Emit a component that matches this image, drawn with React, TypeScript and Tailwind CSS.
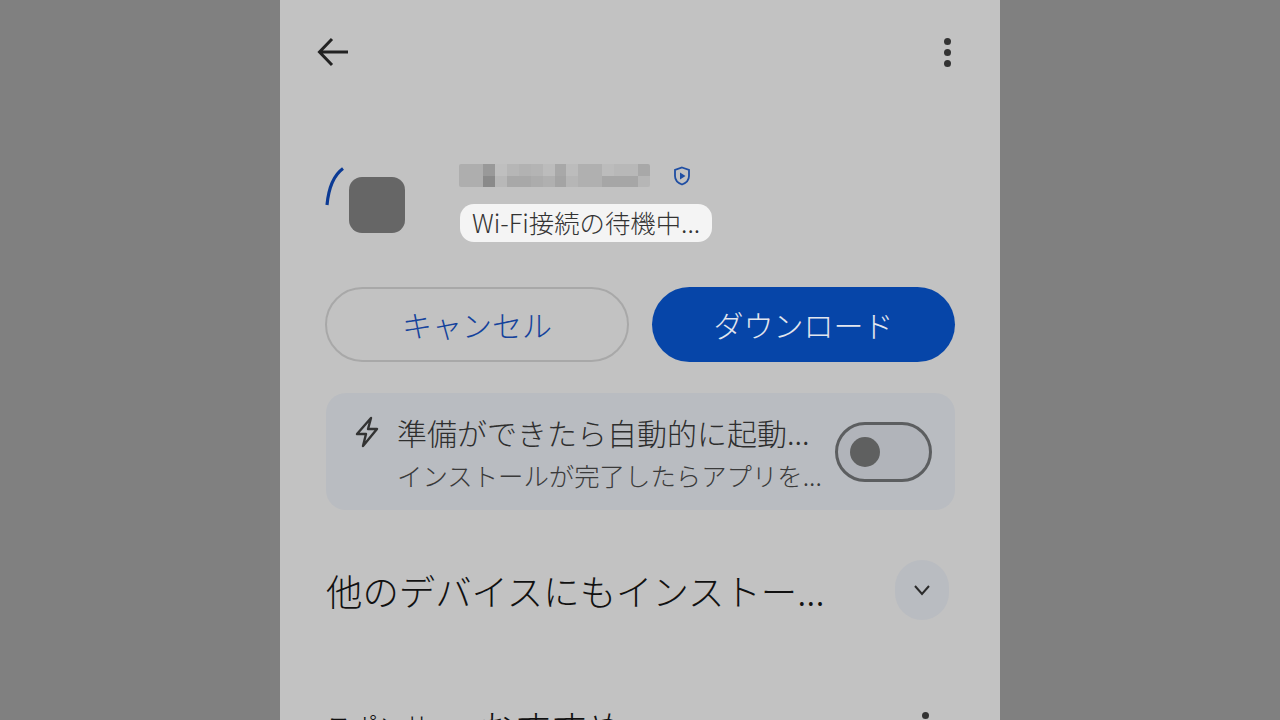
const mosaic = [
  "#aeaeae", "#aeaeae", "#999999", "#bfbfbf", "#b6b6b6", "#b2b2b2", "#b4b4b4", "#bcbcbc", "#a8a8a8", "#bcbcbc", "#b0b0b0", "#b0b0b0", "#bcbcbc", "#b8b8b8", "#b8b8b8", "#a8a8a8",
  "#aeaeae", "#aeaeae", "#8a8a8a", "#b8b8b8", "#a8a8a8", "#a8a8a8", "#acacac", "#b0b0b0", "#a4a4a4", "#b6b6b6", "#b0b0b0", "#b0b0b0", "#a6a6a6", "#a6a6a6", "#a6a6a6", "#b6b6b6",
]

export default function App() {
  return (
    <div className="flex justify-center h-screen overflow-hidden bg-[#808080] font-['Noto_Sans_CJK_JP','Noto_Sans',sans-serif] font-light">
      <div className="w-[720px] h-[720px] overflow-hidden bg-[#c2c2c2] pl-[45px] pr-[45px]">
        {/* Top bar */}
        <div className="flex items-center justify-between h-[104px] -ml-[9px] mr-[4px]">
          <svg width="34" height="32" viewBox="0 0 34 32" fill="none" stroke="#222" strokeWidth="3">
            <path d="M32 16H4M16 3L3.5 16L16 29" />
          </svg>
          <div className="flex flex-col gap-[4px]">
            <div className="w-[7px] h-[7px] rounded-full bg-[#333]"></div>
            <div className="w-[7px] h-[7px] rounded-full bg-[#333]"></div>
            <div className="w-[7px] h-[7px] rounded-full bg-[#333]"></div>
          </div>
        </div>

        {/* App header */}
        <div className="flex mt-[60px] h-[78px]">
          <div className="relative w-[134px]">
            <svg className="absolute left-0 top-[3px]" width="20" height="40" viewBox="0 0 20 40" fill="none" stroke="#0b3a94" strokeWidth="3.2">
              <path d="M18 1.5C9 8 3.5 22 2 38" />
            </svg>
            <div className="absolute left-[24px] top-[13px] w-[56px] h-[56px] rounded-[13px] bg-[#666666]"></div>
          </div>
          <div className="flex flex-col items-start">
            <div className="flex items-center gap-[23px]">
              <div className="grid grid-cols-[repeat(16,1fr)] w-[191px] h-[23px] rounded-[2px] overflow-hidden blur-[0.6px]">
                {mosaic.map((c, i) => (
                  <div key={i} style={{ backgroundColor: c }}></div>
                ))}
              </div>
              <svg width="18" height="20" viewBox="0 0 18 20" fill="none">
                <path d="M9 1.5L16 4V10C16 14 13 17 9 18.5C5 17 2 14 2 10V4Z" stroke="#1f4ea3" strokeWidth="1.8" />
                <path d="M7 6.5L12.5 10L7 13.5Z" fill="#1f4ea3" />
              </svg>
            </div>
            <div className="mt-[17px] ml-[1px] h-[38px] w-[252px] pl-[12px] flex items-center rounded-[14px] bg-[#f4f4f4] text-[25.4px] leading-none text-[#333] whitespace-nowrap">
              Wi-Fi接続の待機中...
            </div>
          </div>
        </div>

        {/* Buttons */}
        <div className="flex gap-[23px] mt-[45px]">
          <button className="w-[304px] h-[75px] rounded-full border-2 border-[#a8a8a8] text-[#14429c] text-[30px]">
            キャンセル
          </button>
          <button className="w-[303px] h-[75px] rounded-full bg-[#0645a8] text-[#e2e6ee] text-[30px]">
            ダウンロード
          </button>
        </div>

        {/* Auto open card */}
        <div className="flex items-center h-[117px] mt-[31px] ml-[1px] w-[629px] rounded-[20px] bg-[#b9bcc1]">
          <div className="flex flex-col whitespace-nowrap pl-[28px]">
            <div className="flex items-center">
              <svg width="26" height="32" viewBox="0 0 26 32" fill="none" stroke="#333" strokeWidth="2.4" strokeLinejoin="round">
                <path d="M17 2L3 18H12L9 30L23 13H14Z" />
              </svg>
              <span className="ml-[17px] text-[30px] leading-[40px] text-[#2e2e2e]">準備ができたら自動的に起動...</span>
            </div>
            <span className="ml-[43px] mt-[6px] text-[25.4px] leading-[34px] text-[#3a3a3a]">インストールが完了したらアプリを...</span>
          </div>
          <div className="relative ml-auto mr-[23px] w-[97px] h-[60px] rounded-full border-[3px] border-[#5c5e60] bg-[#b1b4ba]">
            <div className="absolute left-[12px] top-[12px] w-[30px] h-[30px] rounded-full bg-[#5f6060]"></div>
          </div>
        </div>

        {/* Other devices */}
        <div className="flex items-center justify-between h-[60px] mt-[50px] ml-[1px] mr-[6px]">
          <span className="text-[36.4px] leading-none text-[#111] whitespace-nowrap">他のデバイスにもインストー...</span>
          <div className="flex items-center justify-center w-[54px] h-[60px] rounded-full bg-[#b9bcc1]">
            <svg width="18" height="14" viewBox="0 0 18 14" fill="none" stroke="#2b2b2b" strokeWidth="2">
              <path d="M2 3L9 11L16 3" />
            </svg>
          </div>
        </div>

        {/* Recommended */}
        <div className="flex justify-between items-start mt-[88px] ml-[1px] mr-[6px]">
          <div className="flex items-start gap-[23px] whitespace-nowrap text-[#111]">
            <span className="text-[26px] leading-none mt-[5px]">スポンサー</span>
            <span className="text-[36px] leading-none">おすすめ</span>
          </div>
          <div className="w-[7px] h-[7px] mt-[4px] mr-[20px] rounded-full bg-[#333]"></div>
        </div>
      </div>
    </div>
  )
}
